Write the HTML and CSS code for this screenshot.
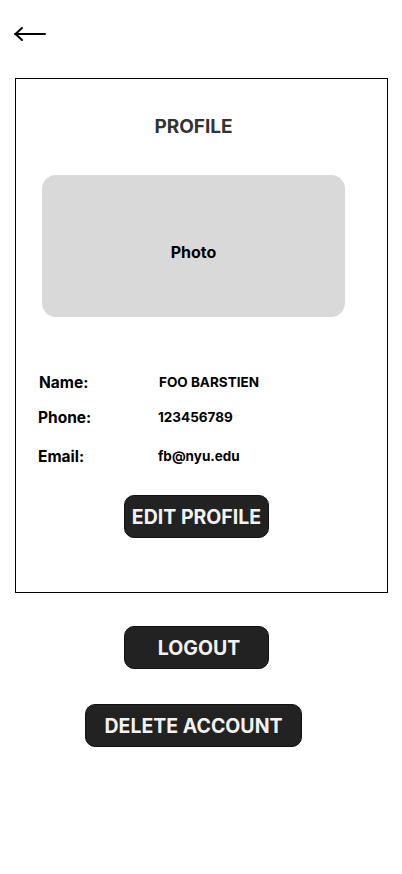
FILE: index.html
```html
<!DOCTYPE html>
<html lang="en">
<head>
  <meta charset="UTF-8" />
  <meta name="viewport" content="width=device-width, initial-scale=1.0" />
  <title>Profile</title>
  <link rel="stylesheet" href="styles.css">
</head>
<body>
  <div class="page">
    <div class="topbar">
      <a class="back" href="#" aria-label="Back">
        <svg width="32" height="14" viewBox="0 0 32 14">
          <path d="M1 7 H31 M8 1 L1.5 7 L8 13" fill="none" stroke="#000" stroke-width="2" stroke-linecap="round" stroke-linejoin="round"/>
        </svg>
      </a>
    </div>

    <div class="card">
      <h1>PROFILE</h1>
      <div class="photo">Photo</div>

      <div class="info">
        <div class="row row-name"><span class="label">Name:</span><span class="value">FOO BARSTIEN</span></div>
        <div class="row row-phone"><span class="label">Phone:</span><span class="value">123456789</span></div>
        <div class="row row-email"><span class="label">Email:</span><span class="value">fb@nyu.edu</span></div>
      </div>

      <button class="btn btn-edit">EDIT PROFILE</button>
    </div>

    <div class="actions">
      <button class="btn btn-logout">LOGOUT</button>
      <button class="btn btn-delete">DELETE ACCOUNT</button>
    </div>
  </div>
</body>
</html>
```

FILE: styles.css
```css
body {
  font-family: Inter, 'Noto Sans', sans-serif;
  background: white;
  margin: 0;
  padding: 0;
  color: #000;
}
.page {
  width: 402px;
  min-height: 874px;
}
.topbar {
  height: 78px;
  padding-left: 14px;
  box-sizing: border-box;
  padding-top: 27px;
}
.back {
  display: block;
  width: 32px;
  height: 14px;
}
.back svg {
  display: block;
}
.card {
  margin-left: 15px;
  width: 373px;
  height: 515px;
  border: 1px solid #000;
  box-sizing: border-box;
  display: flex;
  flex-direction: column;
}
h1 {
  margin: 36px 0 0 0;
  font-size: 19px;
  line-height: 24px;
  font-weight: 700;
  color: #333;
  text-align: center;
  padding-right: 16px;
}
.photo {
  margin: 36px 0 0 26px;
  width: 303px;
  height: 142px;
  background-color: #d9d9d9;
  border-radius: 14px;
  display: flex;
  align-items: center;
  justify-content: center;
  font-size: 16px;
  font-weight: 700;
  padding-top: 12px;
  box-sizing: border-box;
}
.info {
  margin-top: 48px;
  display: flex;
  flex-direction: column;
}
.row {
  display: grid;
  grid-template-columns: 142px 1fr;
  align-items: center;
}
.row-name {
  height: 34px;
}
.row-phone {
  height: 36px;
}
.row-email {
  height: 42px;
}
.label {
  padding-left: 22px;
  font-size: 15.5px;
  font-weight: 700;
}
.value {
  font-size: 13.5px;
  font-weight: 700;
}
.row-name .label,
.row-name .value {
  padding-left: 1px;
}
.row-name .label {
  padding-left: 23px;
}
.btn {
  background-color: #222;
  color: #f2f2f2;
  border: 1px solid #111;
  border-radius: 10px;
  height: 43px;
  font-family: Inter, 'Noto Sans', sans-serif;
  font-size: 19.5px;
  font-weight: 700;
  cursor: pointer;
  padding: 0;
}
.btn-edit {
  margin: 18px 0 0 108px;
  width: 145px;
}
.actions {
  display: flex;
  flex-direction: column;
  align-items: flex-start;
}
.btn-logout {
  margin: 33px 0 0 124px;
  width: 145px;
  padding-left: 5px;
}
.btn-delete {
  margin: 35px 0 0 85px;
  width: 217px;
}
```
